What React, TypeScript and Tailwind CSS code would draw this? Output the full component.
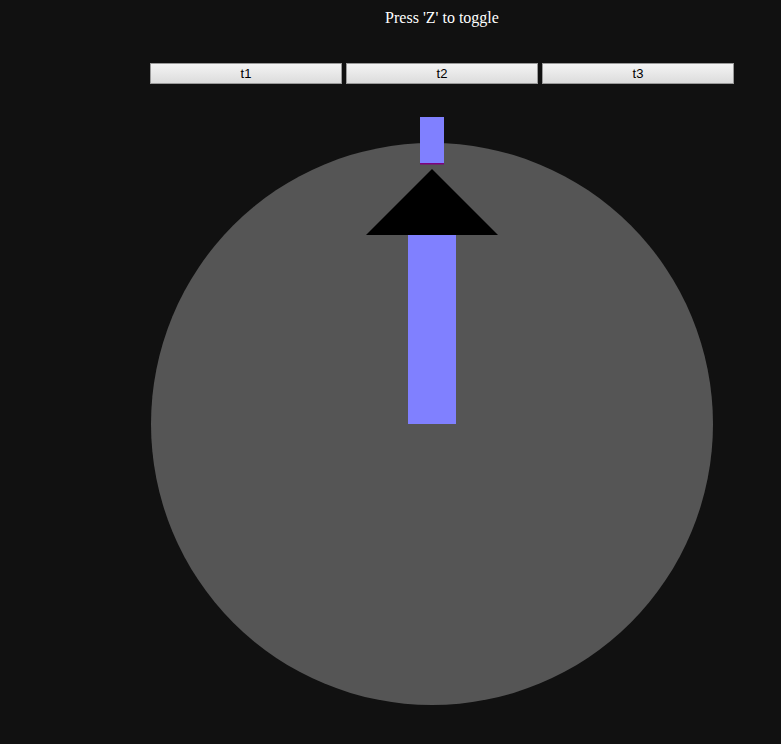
const TABS = ["t1", "t2", "t3"]

export default function App() {
  return (
    <div className="h-[744px] w-[781px] overflow-hidden bg-[#111111]">
      <div className="ml-[150px] w-[584px]">
        {/* Header */}
        <p className="pt-[9px] text-center font-['Liberation_Serif',serif] text-[16px] leading-[18px] text-white">
          Press 'Z' to toggle
        </p>

        {/* Tabs */}
        <div className="mt-[36px] grid grid-cols-3 gap-[4px]">
          {TABS.map((t) => (
            <button
              key={t}
              className="h-[21px] border border-[#9a9a9a] bg-gradient-to-b from-[#f4f4f4] to-[#dcdcdc] font-['Liberation_Sans',sans-serif] text-[13px] leading-[19px] text-black"
            >
              {t}
            </button>
          ))}
        </div>

        {/* Gauge */}
        <svg
          width="584"
          height="644"
          viewBox="0 0 584 644"
          className="mt-[16px] block"
        >
          <circle cx="282" cy="324" r="281" fill="#555555" />
          <rect x="270" y="17" width="24" height="47" fill="#8080ff" />
          <rect x="270" y="63" width="24" height="1.5" fill="#800080" />
          <polygon points="216,135 348,135 282,69" fill="#000000" />
          <rect x="258" y="135" width="48" height="189" fill="#8080ff" />
        </svg>
      </div>
    </div>
  )
}
